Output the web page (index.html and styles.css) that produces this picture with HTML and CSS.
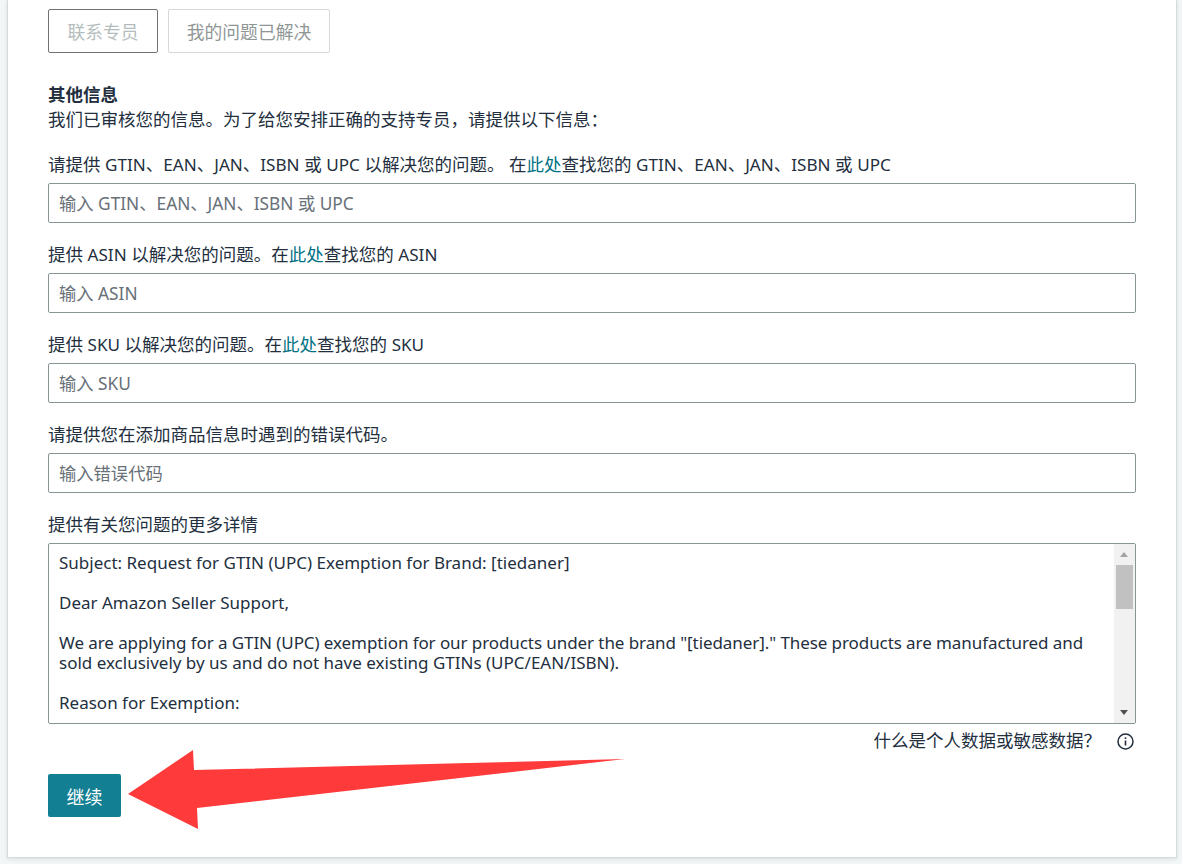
FILE: index.html
```html
<!DOCTYPE html>
<html lang="zh">
<head>
<meta charset="utf-8">
<title>其他信息</title>
<link rel="stylesheet" href="styles.css">
</head>
<body>
<main class="card">
  <div class="actions">
    <button class="btn btn-contact">联系专员</button>
    <button class="btn btn-solved">我的问题已解决</button>
  </div>
  <section class="intro">
    <h2 class="intro-title">其他信息</h2>
    <p class="intro-text">我们已审核您的信息。为了给您安排正确的支持专员，请提供以下信息：</p>
  </section>
  <div class="field">
    <label class="label">请提供 <span class="lat">GTIN</span>、<span class="lat">EAN</span>、<span class="lat">JAN</span>、<span class="lat">ISBN</span> 或 <span class="lat">UPC</span> 以解决您的问题。 在<a class="link">此处</a>查找您的 <span class="lat">GTIN</span>、<span class="lat">EAN</span>、<span class="lat">JAN</span>、<span class="lat">ISBN</span> 或 <span class="lat">UPC</span></label>
    <input class="input" placeholder="输入 GTIN、EAN、JAN、ISBN 或 UPC">
  </div>
  <div class="field">
    <label class="label">提供 <span class="lat">ASIN</span> 以解决您的问题。在<a class="link">此处</a>查找您的 <span class="lat">ASIN</span></label>
    <input class="input" placeholder="输入 ASIN">
  </div>
  <div class="field">
    <label class="label">提供 <span class="lat">SKU</span> 以解决您的问题。在<a class="link">此处</a>查找您的 <span class="lat">SKU</span></label>
    <input class="input" placeholder="输入 SKU">
  </div>
  <div class="field">
    <label class="label">请提供您在添加商品信息时遇到的错误代码。</label>
    <input class="input" placeholder="输入错误代码">
  </div>
  <div class="field">
    <label class="label">提供有关您问题的更多详情</label>
    <div class="textarea">
      <div class="textarea-text">Subject: Request for GTIN (UPC) Exemption for Brand: [tiedaner]<br><br>Dear Amazon Seller Support,<br><br><span class="tight">We are applying for a GTIN (UPC) exemption for our products under the brand "[tiedaner]." These products are manufactured and</span><br>sold exclusively by us and do not have existing GTINs (UPC/EAN/ISBN).<br><br>Reason for Exemption:</div>
      <div class="scrollbar">
        <span class="arrow arrow-up"></span>
        <span class="thumb"></span>
        <span class="arrow arrow-down"></span>
      </div>
    </div>
  </div>
  <div class="hint">
    <span>什么是个人数据或敏感数据？</span>
    <svg class="info" width="17" height="17" viewBox="0 0 17 17" aria-hidden="true">
      <circle cx="8.5" cy="8.5" r="7.5" fill="none" stroke="#232f3e" stroke-width="1.5"/>
      <rect x="7.7" y="7.5" width="1.6" height="5" fill="#232f3e"/>
      <rect x="7.7" y="4.3" width="1.6" height="1.7" fill="#232f3e"/>
    </svg>
  </div>
  <button class="btn-primary">继续</button>
</main>
<svg class="arrow-overlay" width="500" height="80" viewBox="0 0 500 80" aria-hidden="true">
  <polygon points="497,9 66,20 65,0 0,44 70,79 69,58" fill="#ff3a3a"/>
</svg>
</body>
</html>
```
FILE: styles.css
```css
* { box-sizing: border-box; }
html, body { margin: 0; padding: 0; }
body {
  height: 864px;
  overflow: hidden;
  background: #f3f6f7;
  font-family: "Noto Sans", "Noto Sans CJK SC", sans-serif;
  font-size: 17.5px;
  color: #232f3e;
  padding-left: 7px;
  position: relative;
}
.card {
  width: 1170px;
  height: 858px;
  background: #fff;
  border: 1px solid #d5dbdb;
  border-top: 0;
  box-shadow: 0 1px 4px rgba(0, 0, 0, .1);
  padding: 9px 40px 0;
}
.actions { display: flex; gap: 10px; height: 44px; }
.btn {
  font: inherit;
  font-size: 17.8px;
  background: #fff;
  border-radius: 2px;
  height: 44px;
  padding: 0;
}
.btn-contact { width: 110px; border: 1px solid #6f7373; color: #b4bdbd; }
.btn-solved { width: 162px; border: 1px solid #d5d9d9; color: #8f9696; }
.intro { margin-top: 30px; }
.intro-title { margin: 0; font-size: 17.5px; font-weight: 700; line-height: 22px; }
.intro-text { margin: 0; line-height: 28px; }
.field { margin-top: 20px; }
.label { display: block; line-height: 22px; height: 24px; margin-bottom: 6px; white-space: nowrap; }
.lat { font-size: 17.1px; }
.link { color: #007185; }
.input {
  display: block;
  width: 100%;
  height: 40px;
  font: inherit;
  font-size: 17.3px;
  border: 1px solid #879596;
  border-radius: 2px;
  padding: 0 10px;
  outline: 0;
}
.input::placeholder { color: #687078; opacity: 1; }
.textarea {
  display: flex;
  width: 100%;
  height: 181px;
  border: 1px solid #879596;
  border-radius: 2px;
  overflow: hidden;
}
.textarea-text {
  flex: 1;
  padding: 9px 10px 0;
  font-size: 17px;
  line-height: 20px;
  white-space: nowrap;
  overflow: hidden;
}
.tight { letter-spacing: -0.08px; }
.scrollbar {
  position: relative;
  width: 21px;
  background: #f1f1f1;
}
.thumb { position: absolute; top: 21px; left: 2px; width: 17px; height: 44px; background: #c1c1c1; }
.arrow { position: absolute; left: 6px; width: 0; height: 0; border-left: 4.5px solid transparent; border-right: 4.5px solid transparent; }
.arrow-up { top: 8px; border-bottom: 5px solid #a3a3a3; }
.arrow-down { bottom: 8px; border-top: 5px solid #505050; }
.hint {
  display: flex;
  justify-content: flex-end;
  align-items: center;
  height: 34px;
  font-size: 17.5px;
  line-height: 32px;
}
.hint span { margin-top: -2px; }
.info { margin-left: 16px; margin-right: 2px; }
.btn-primary {
  display: block;
  margin-top: 16px;
  width: 73px;
  height: 43px;
  font: inherit;
  font-size: 18px;
  color: #fff;
  background: #137f93;
  border: 0;
  border-radius: 2px;
}
.arrow-overlay {
  position: absolute;
  left: 128px;
  top: 750px;
  overflow: visible;
}
```
